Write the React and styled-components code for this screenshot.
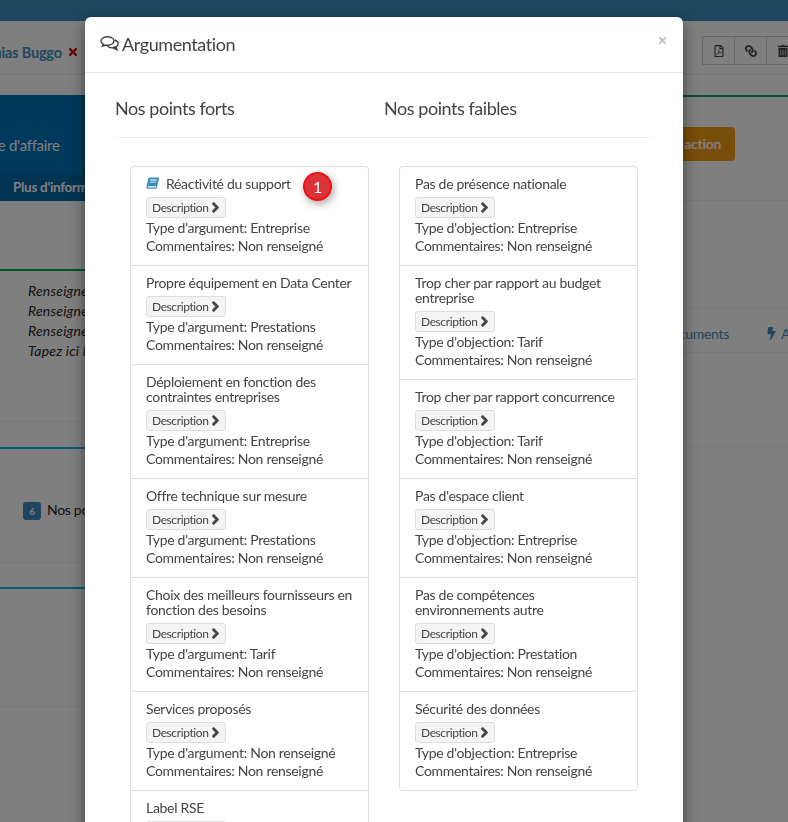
import React from 'react';
import styled, { createGlobalStyle } from 'styled-components';
import { FaBolt, FaChevronRight, FaLink, FaRegFilePdf, FaTimes, FaTrashAlt } from 'react-icons/fa';

const GlobalStyle = createGlobalStyle`
    html, body {
        margin: 0;
        height: 100%;
        overflow: hidden;
        background: #fff;
    }
    body {
        font-family: "Lato", "Liberation Sans", sans-serif;
        font-size: 14px;
        letter-spacing: -.3px;
        color: #444;
    }
    * { box-sizing: border-box; }
`;

const Page = styled.div`
    height: 822px;
    overflow: hidden;
`;

const TopBar = styled.div`
    height: 21px;
    background: #3c8dbc;
`;

const Columns = styled.div`
    display: grid;
    grid-template-columns: 400px 388px;
`;

const Column = styled.div`
    display: flex;
    flex-direction: column;
    min-width: 0;
`;

const NameRow = styled.div`
    height: 54px;
    display: flex;
    align-items: center;
    border-bottom: 1px solid #eee;
    white-space: nowrap;
    font-weight: 700;
    color: #3c8dbc;
    padding-top: 9px;
`;

const Name = styled.span`
    margin-left: -32px;
    display: flex;
    align-items: center;
    gap: 5px;
    font-size: 14.5px;
    letter-spacing: -.2px;
    svg { color: #c00; font-size: 12px; }
`;

const Hero = styled.div`
    margin-top: 20px;
    height: 106px;
    background: #0073b7;
    color: #fff;
    display: flex;
    flex-direction: column;
    justify-content: flex-end;
`;

const HeroTitle = styled.div`
    padding: 0 0 21px 0;
    margin-left: -38px;
    font-size: 15px;
    white-space: nowrap;
`;

const HeroTab = styled.div`
    height: 26px;
    background: #0068a5;
    padding: 4px 0 0 13px;
    font-size: 13.5px;
    font-weight: 700;
    white-space: nowrap;
`;

const Box = styled.div`
    height: ${p => p.$height}px;
    margin-top: ${p => p.$gap}px;
    border-top: 2px solid ${p => p.$accent};
    border-bottom: 1px solid #f0f0f0;
`;

const Notes = styled.div`
    padding: 10px 0 0 28px;
    font-style: italic;
    line-height: 20px;
    letter-spacing: .2px;
    white-space: nowrap;
    color: #222;
`;

const Counter = styled.div`
    display: flex;
    align-items: center;
    gap: 6px;
    padding: 53px 0 0 23px;
    color: #222;
`;

const CounterLabel = styled.span`
    margin-top: -4px;
`;

const CountBadge = styled.span`
    width: 18px;
    height: 18px;
    border-radius: 3px;
    background: #3c8dbc;
    color: #fff;
    font-size: 10px;
    font-weight: 700;
    display: flex;
    align-items: center;
    justify-content: center;
`;

const ToolRow = styled.div`
    height: 54px;
    display: flex;
    justify-content: flex-end;
    align-items: flex-start;
    padding: 15px 0 0 0;
    margin-right: -11px;
    border-bottom: 1px solid #eee;
`;

const ToolButton = styled.span`
    width: 33px;
    height: 29px;
    margin-left: -1px;
    border: 1px solid #ccc;
    display: flex;
    align-items: center;
    justify-content: center;
    font-size: 12px;
    color: #444;
    svg.flip { transform: scaleX(-1); }
`;

const ActionBox = styled.div`
    margin-top: 20px;
    height: 106px;
    border-top: 2px solid #00a65a;
    border-bottom: 1px solid #f0f0f0;
    display: flex;
    justify-content: flex-end;
    padding: 30px 53px 0 0;
`;

const ActionButton = styled.span`
    width: 120px;
    height: 34px;
    border-radius: 4px;
    background: #f39c12;
    color: #fff;
    font-weight: 700;
    display: flex;
    align-items: center;
    justify-content: flex-end;
    padding: 0 14px 2px 0;
    white-space: nowrap;
`;

const TabRow = styled.div`
    margin-top: 107px;
    height: 45px;
    padding-top: 5px;
    border-top: 1px solid #f0f0f0;
    border-bottom: 1px solid #f0f0f0;
    display: flex;
    align-items: center;
    justify-content: flex-end;
    gap: 36px;
    color: #3c8dbc;
    white-space: nowrap;
    overflow: hidden;
`;

const TabLink = styled.span`
    display: flex;
    align-items: center;
    gap: 3px;
    svg { font-size: 13px; }
    &:last-child { margin-right: -37px; }
`;

const RightRule = styled.div`
    margin-top: 93px;
    border-top: 1px solid #f0f0f0;
`;

const Backdrop = styled.div`
    position: fixed;
    inset: 0;
    background: rgba(0, 0, 0, .5);
    padding: 17px 0 0 85px;
`;

const Modal = styled.div`
    width: 598px;
    background: #fff;
    border-radius: 6px;
    box-shadow: 0 5px 15px rgba(0, 0, 0, .5);
`;

const ModalHeader = styled.div`
    height: 56px;
    padding: 14px 15px 16px;
    border-bottom: 1px solid #e5e5e5;
    display: flex;
    align-items: center;
    justify-content: space-between;
`;

const ModalTitle = styled.h4`
    margin: 0;
    font-size: 18px;
    font-weight: 400;
    color: #444;
    display: flex;
    align-items: center;
    gap: 3px;
    letter-spacing: -.4px;
    svg { width: 19px; height: 17px; flex: none; }
`;

const Close = styled.span`
    color: #c4c4c4;
    font-size: 11px;
    display: flex;
    margin: -6px 0 0 0;
`;

const ModalBody = styled.div`
    padding: 13px 30px 15px;
`;

const HeadingRow = styled.div`
    display: grid;
    grid-template-columns: 269px 269px;
    padding: 10px 0 17px;
    border-bottom: 1px solid #eee;
    margin-bottom: 28px;
`;

const Heading = styled.h3`
    margin: 0;
    font-size: 18px;
    font-weight: 400;
    line-height: 24px;
    letter-spacing: -.45px;
    color: #444;
`;

const ListRow = styled.div`
    display: grid;
    grid-template-columns: 269px 269px;
    align-items: start;
`;

const List = styled.ul`
    position: relative;
    list-style: none;
    margin: 0 15px;
    padding: 0;
    border: 1px solid #ddd;
    border-radius: 4px;
`;

const Item = styled.li`
    padding: 10px 15px;
    line-height: 18px;
    border-top: ${p => (p.$first ? 'none' : '1px solid #ddd')};
    position: relative;
`;

const ItemTitle = styled.div`
    line-height: 15px;
    margin: -1px 0 6px;
    display: flex;
    align-items: flex-start;
    gap: 6px;
    svg { width: 14px; height: 13px; flex: none; margin-top: 1px; }
`;

const DescButton = styled.button`
    display: flex;
    align-items: center;
    gap: 2px;
    height: 21px;
    margin-bottom: 1px;
    padding: 0 4px 0 5px;
    border: 1px solid #ddd;
    border-radius: 3px;
    background: #f4f4f4;
    color: #444;
    font-family: inherit;
    font-size: 12px;
    letter-spacing: -.4px;
    svg { font-size: 11px; stroke: currentColor; stroke-width: 50px; }
`;

const Marker = styled.span`
    position: absolute;
    top: 5px;
    left: 172px;
    width: 29px;
    height: 29px;
    border-radius: 50%;
    background: #dc333a;
    border: 2px solid #f01018;
    box-shadow: 2px 3px 8px rgba(0, 0, 0, .35);
    color: #fff;
    font-size: 16px;
    display: flex;
    align-items: center;
    justify-content: center;
`;

const BookIcon = () => (
    <svg viewBox="0 0 14 13">
        <path fill="#3c8dbc" d="M3.4 0.5H13.2L10.9 10.2C10.7 11.2 10 11.8 9 11.8H2C0.9 11.8 0.2 10.9 0.5 9.6L2.2 1.6C2.4 0.9 2.8 0.5 3.4 0.5ZM1.9 9.4C1.7 10 2 10.5 2.6 10.5H9.2C9.6 10.5 9.8 10.3 9.9 9.9L10.1 9.2H2.5C2.2 9.2 2 9.2 1.9 9.4ZM4.4 2.6L4.2 3.5H10.6L10.8 2.6ZM3.9 4.7L3.7 5.6H10.1L10.3 4.7Z" fillRule="evenodd" />
    </svg>
);

const CommentsIcon = () => (
    <svg viewBox="0 0 19 17" fill="none" stroke="#444" strokeWidth="1.4">
        <path d="M7.5 1.8C3.9 1.800 1 3.700 1 6C1 7.300 1.900 8.400 3.300 9.200L2.400 11.200L5.300 10C6 10.100 6.700 10.200 7.500 10.200C11.100 10.200 14 8.300 14 6C14 3.700 11.100 1.800 7.500 1.800Z" />
        <path d="M14.700 5C16.800 5.700 18.200 7.100 18.200 8.700C18.200 10 17.300 11.100 15.900 11.900L17 14.800L13.300 12.800C11.500 13 8.800 12.600 7.500 11" />
        <path fill="#444" stroke="none" d="M12 12.500L17.500 15.500L16.400 11L14 11.500Z" />
    </svg>
);

const strengths = [
    ['Réactivité du support', 'Entreprise'],
    ['Propre équipement en Data Center', 'Prestations'],
    ['Déploiement en fonction des contraintes entreprises', 'Entreprise'],
    ['Offre technique sur mesure', 'Prestations'],
    ['Choix des meilleurs fournisseurs en fonction des besoins', 'Tarif'],
    ['Services proposés', 'Non renseigné'],
    ['Label RSE', 'Non renseigné'],
];

const weaknesses = [
    ['Pas de présence nationale', 'Entreprise'],
    ['Trop cher par rapport au budget entreprise', 'Tarif'],
    ['Trop cher par rapport concurrence', 'Tarif'],
    ["Pas d'espace client", 'Entreprise'],
    ['Pas de compétences environnements autre', 'Prestation'],
    ['Sécurité des données', 'Entreprise'],
];

const PointList = ({ items, typeLabel, highlight }) => (
    <List>
        {items.map(([title, type], i) => (
            <Item key={title} $first={i === 0}>
                <ItemTitle>
                    {highlight && i === 0 && <BookIcon />}
                    <span>{title}</span>
                </ItemTitle>
                <DescButton>Description <FaChevronRight /></DescButton>
                <div>{typeLabel}: {type}</div>
                <div>Commentaires: Non renseigné</div>
                {highlight && i === 0 && <Marker>1</Marker>}
            </Item>
        ))}
    </List>
);

const App = () => (
    <>
        <GlobalStyle />
        <Page>
            <TopBar />
            <Columns>
                <Column>
                    <NameRow>
                        <Name>Mathias Buggo <FaTimes /></Name>
                    </NameRow>
                    <Hero>
                        <HeroTitle>Chiffre d'affaire</HeroTitle>
                        <HeroTab>Plus d'informations</HeroTab>
                    </Hero>
                    <Box $gap={68} $height={153} $accent="#00a65a">
                        <Notes>
                            <div>Renseignez ici le contexte</div>
                            <div>Renseignez ici le besoin</div>
                            <div>Renseignez ici la solution</div>
                            <div>Tapez ici le commentaire</div>
                        </Notes>
                    </Box>
                    <Box $gap={25} $height={116} $accent="#00c0ef">
                        <Counter>
                            <CountBadge>6</CountBadge>
                            <CounterLabel>Nos points forts</CounterLabel>
                        </Counter>
                    </Box>
                    <Box $gap={24} $height={120} $accent="#00c0ef" />
                </Column>
                <Column>
                    <ToolRow>
                        <ToolButton><FaRegFilePdf /></ToolButton>
                        <ToolButton><FaLink className="flip" /></ToolButton>
                        <ToolButton><FaTrashAlt /></ToolButton>
                    </ToolRow>
                    <ActionBox>
                        <ActionButton>Nouvelle action</ActionButton>
                    </ActionBox>
                    <TabRow>
                        <TabLink>Documents</TabLink>
                        <TabLink><FaBolt /> Actions</TabLink>
                    </TabRow>
                    <RightRule />
                </Column>
            </Columns>
        </Page>
        <Backdrop>
            <Modal>
                <ModalHeader>
                    <ModalTitle><CommentsIcon /> Argumentation</ModalTitle>
                    <Close><FaTimes /></Close>
                </ModalHeader>
                <ModalBody>
                    <HeadingRow>
                        <Heading>Nos points forts</Heading>
                        <Heading>Nos points faibles</Heading>
                    </HeadingRow>
                    <ListRow>
                        <PointList items={strengths} typeLabel="Type d'argument" highlight />
                        <PointList items={weaknesses} typeLabel="Type d'objection" />
                    </ListRow>
                </ModalBody>
            </Modal>
        </Backdrop>
    </>
);

export default App;
